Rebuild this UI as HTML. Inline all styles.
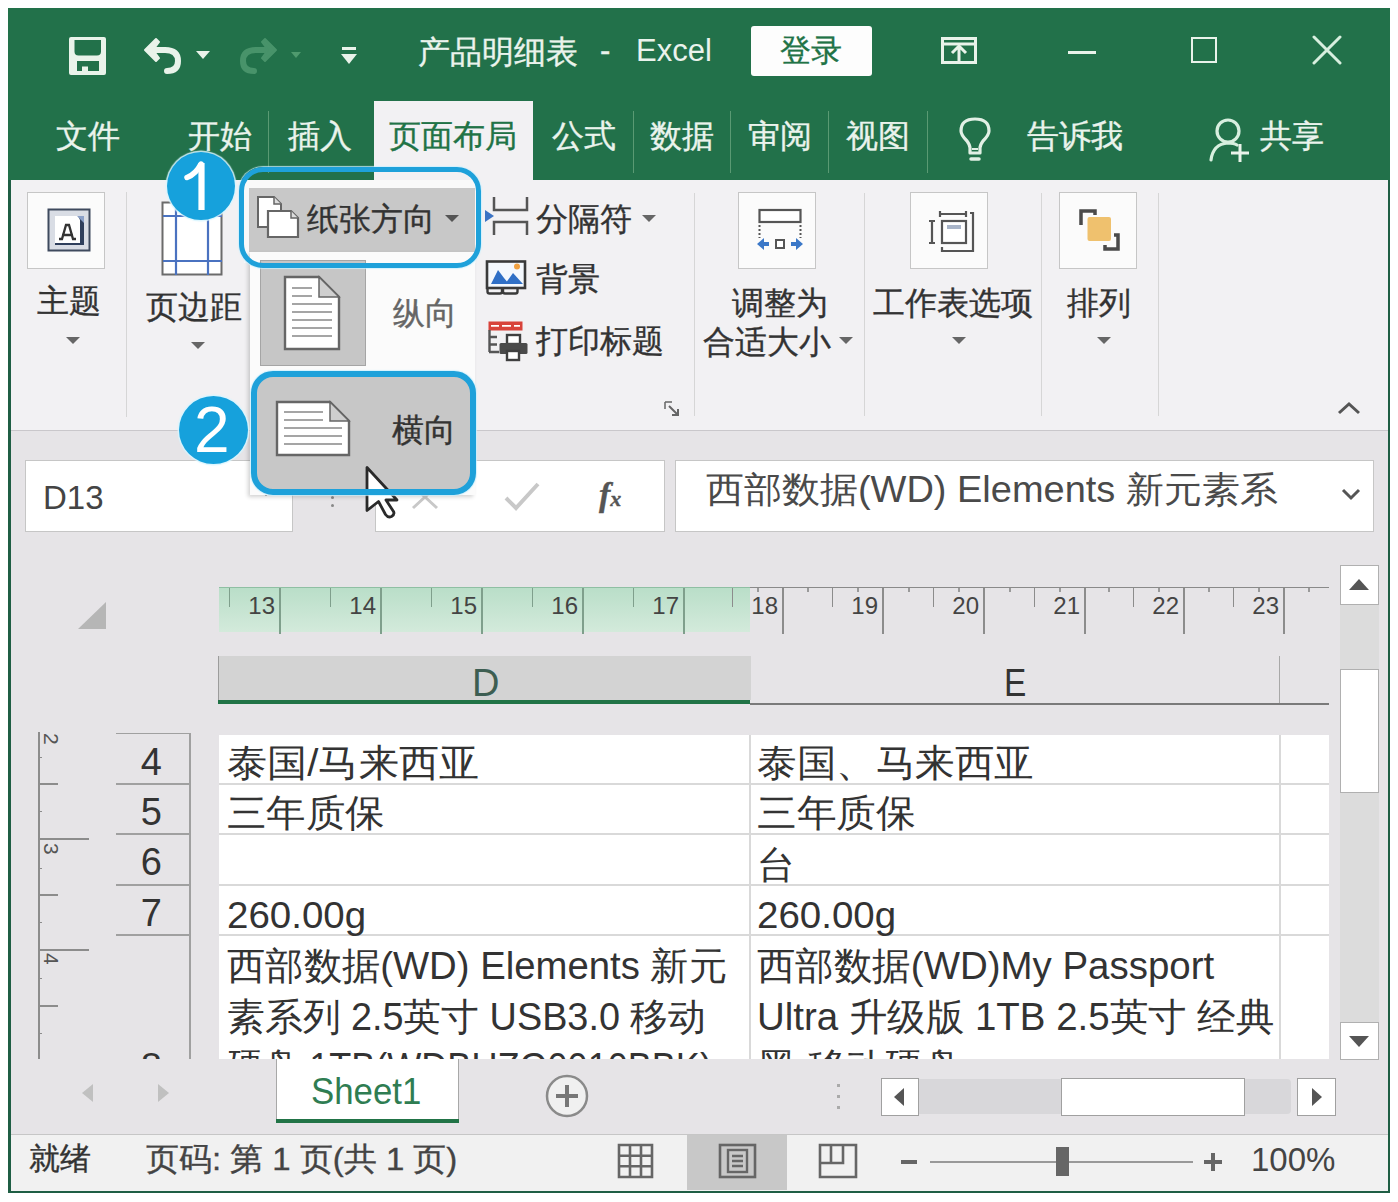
<!DOCTYPE html>
<html><head><meta charset="utf-8">
<style>
html,body{margin:0;padding:0;}
body{width:1398px;height:1202px;overflow:hidden;background:#fff;position:relative;font-family:"Liberation Sans",sans-serif;}
.a{position:absolute;}
.t{position:absolute;white-space:nowrap;line-height:1;-webkit-text-stroke:0.35px currentColor;}
.wt{color:#eaf3ec;}
.ns{-webkit-text-stroke:0 !important;}
.sep{position:absolute;width:1px;background:#d6d6d6;}
.gsep{position:absolute;width:1px;background:#5a9a73;}
</style></head><body>
<!-- window frame -->
<div class="a" style="left:8px;top:8px;width:1382px;height:1185px;background:#1f5e44;"></div>
<!-- title bar -->
<div class="a" style="left:8px;top:8px;width:1382px;height:172px;background:#22714a;"></div>
<!-- ribbon -->
<div class="a" style="left:11px;top:180px;width:1377px;height:250px;background:#f2f1f3;"></div>
<div class="a" style="left:11px;top:430px;width:1377px;height:1px;background:#c9c7cb;"></div>
<!-- formula/grid background -->
<div class="a" style="left:11px;top:431px;width:1377px;height:703px;background:#e6e4e7;"></div>
<!-- status bar -->
<div class="a" style="left:11px;top:1134px;width:1377px;height:1px;background:#c6c6c6;"></div>
<div class="a" style="left:11px;top:1135px;width:1377px;height:56px;background:#f1f1f1;"></div>

<!-- TITLE -->
<div class="t wt" style="left:418px;top:36px;font-size:32px;">产品明细表</div>
<div class="t wt" style="left:600px;top:35px;font-size:31px;">-</div>
<div class="t wt ns" style="left:636px;top:35px;font-size:31px;">Excel</div>
<div class="a" style="left:751px;top:26px;width:121px;height:50px;background:#fdfdfd;border-radius:3px;"></div>
<div class="t" style="left:780px;top:35px;font-size:31px;color:#217346;">登录</div>


<!-- TITLE ICONS -->
<svg class="a" style="left:68px;top:36px;" width="40" height="40" viewBox="0 0 40 40">
 <path d="M1 3 Q1 1 3 1 H36 Q38 1 38 3 V37 Q38 39 36 39 H3 Q1 39 1 37 Z M6.5 4 V15.5 Q6.5 19.5 10.5 19.5 H29 Q33 19.5 33 15.5 V4 Z M9 25 V35 H14 V30.5 H20 V35 H31 V25 Z" fill="#e9f3ea" fill-rule="evenodd"/>
</svg>
<svg class="a" style="left:143px;top:35px;" width="42" height="40" viewBox="0 0 42 40">
 <path d="M8 15 H22 Q35 15 35 26 Q35 36 24 36" stroke="#e9f3ea" stroke-width="6" fill="none" stroke-linecap="round"/>
 <path d="M2 15 L13 4 L16 7 L10 15 L16 23 L13 26 Z" fill="#e9f3ea" stroke="#e9f3ea" stroke-width="2" stroke-linejoin="round"/>
</svg>
<svg class="a" style="left:195px;top:50px;" width="16" height="10"><path d="M1 1 H15 L8 9Z" fill="#e9f3ea"/></svg>
<svg class="a" style="left:236px;top:35px;" width="42" height="40" viewBox="0 0 42 40">
 <path d="M34 15 H20 Q7 15 7 26 Q7 36 18 36" stroke="#48936a" stroke-width="6" fill="none" stroke-linecap="round"/>
 <path d="M40 15 L29 4 L26 7 L32 15 L26 23 L29 26 Z" fill="#48936a" stroke="#48936a" stroke-width="2" stroke-linejoin="round"/>
</svg>
<svg class="a" style="left:290px;top:51px;" width="12" height="8"><path d="M1 1 H11 L6 7Z" fill="#4f9a6e"/></svg>
<div class="a" style="left:342px;top:47px;width:14px;height:3px;background:#e9f3ea;"></div>
<svg class="a" style="left:340px;top:53px;" width="18" height="12"><path d="M1 1 H17 L9 11Z" fill="#e9f3ea"/></svg>

<svg class="a" style="left:940px;top:36px;" width="38" height="29" viewBox="0 0 38 29">
 <rect x="2.5" y="2.5" width="33" height="24" fill="none" stroke="#e9f3ea" stroke-width="3"/>
 <path d="M3 8 H35" stroke="#e9f3ea" stroke-width="3"/>
 <path d="M19 27 V10 M12 17 L19 10 L26 17" stroke="#e9f3ea" stroke-width="3" fill="none"/>
</svg>
<div class="a" style="left:1068px;top:51px;width:28px;height:3px;background:#e9f3ea;"></div>
<div class="a" style="left:1191px;top:37px;width:22px;height:22px;border:2.5px solid #e9f3ea;"></div>
<svg class="a" style="left:1311px;top:35px;" width="32" height="30" viewBox="0 0 32 30">
 <path d="M3 2 L29 28 M29 2 L3 28" stroke="#d8efdf" stroke-width="3" stroke-linecap="round"/>
</svg>
<svg class="a" style="left:957px;top:116px;" width="36" height="48" viewBox="0 0 36 48">
 <path d="M13 37 V32 Q13 29 10 25 Q4 19 4 15 Q4 3 18 3 Q32 3 32 15 Q32 19 26 25 Q23 29 23 32 V37 Z" fill="none" stroke="#e2f0e5" stroke-width="3.2" stroke-linejoin="round"/>
 <path d="M15 33 H21" stroke="#e2f0e5" stroke-width="2"/>
 <path d="M14 43 H22" stroke="#e2f0e5" stroke-width="3.5" stroke-linecap="round"/>
</svg>
<svg class="a" style="left:1207px;top:117px;" width="46" height="46" viewBox="0 0 46 46">
 <circle cx="21" cy="14" r="11" fill="none" stroke="#d8efdf" stroke-width="3.2"/>
 <path d="M4 43 Q6 27 21 26 Q27 26 30 28" fill="none" stroke="#d8efdf" stroke-width="3.2" stroke-linecap="round"/>
 <path d="M33 27 V45 M24 36 H42" stroke="#e9f3ea" stroke-width="3"/>
</svg>

<!-- TABS -->
<div class="t wt" style="left:56px;top:120px;font-size:32px;">文件</div>
<div class="t wt" style="left:188px;top:120px;font-size:32px;">开始</div>
<div class="gsep" style="left:268px;top:111px;height:62px;"></div>
<div class="t wt" style="left:288px;top:120px;font-size:32px;">插入</div>
<div class="a" style="left:374px;top:101px;width:159px;height:79px;background:#f2f1f3;"></div>
<div class="t" style="left:389px;top:120px;font-size:32px;color:#217346;">页面布局</div>
<div class="t wt" style="left:552px;top:120px;font-size:32px;">公式</div>
<div class="gsep" style="left:633px;top:111px;height:62px;"></div>
<div class="t wt" style="left:650px;top:120px;font-size:32px;">数据</div>
<div class="gsep" style="left:730px;top:111px;height:62px;"></div>
<div class="t wt" style="left:748px;top:120px;font-size:32px;">审阅</div>
<div class="gsep" style="left:828px;top:111px;height:62px;"></div>
<div class="t wt" style="left:846px;top:120px;font-size:32px;">视图</div>
<div class="gsep" style="left:927px;top:111px;height:62px;"></div>
<div class="t wt" style="left:1027px;top:120px;font-size:32px;">告诉我</div>
<div class="t wt" style="left:1260px;top:120px;font-size:32px;">共享</div>


<!-- RIBBON CONTENT -->
<!-- theme -->
<div class="a" style="left:27px;top:192px;width:76px;height:75px;background:#fbfbfb;border:1px solid #c6c6c6;"></div>
<svg class="a" style="left:47px;top:208px;" width="45" height="45" viewBox="0 0 45 45">
 <rect x="1.5" y="1.5" width="41" height="41" fill="#d9dde5" stroke="#3e4a5e" stroke-width="2"/>
 <rect x="8" y="8" width="29" height="29" fill="#fff"/>
 <path d="M31 8 L37 8 L37 37 L8 37 L8 35 L33 35 L33 12 Z" fill="#2f3f5c"/>
 <path d="M30 8 L37 15 L37 8Z" fill="#8aa0c8"/>
 <path d="M12 31 L15 31 L19 17 L22 17 L26 31 L29 31 M15 27 L26 27" fill="none" stroke="#333" stroke-width="2.3"/>
</svg>
<div class="t" style="left:37px;top:285px;font-size:32px;color:#333;">主题</div>
<svg class="a" style="left:65px;top:336px;" width="16" height="9"><path d="M1 1 L15 1 L8 8Z" fill="#666"/></svg>
<div class="sep" style="left:126px;top:192px;height:225px;"></div>
<!-- margins -->
<svg class="a" style="left:161px;top:201px;" width="63" height="76" viewBox="0 0 63 76">
 <rect x="1.5" y="1.5" width="59" height="72" fill="#fff" stroke="#6b6b6b" stroke-width="2"/>
 <path d="M15 2 V74 M47 2 V74 M2 15 H61 M2 60 H61" stroke="#4a72c0" stroke-width="2.2" fill="none"/>
</svg>
<div class="t" style="left:146px;top:291px;font-size:32px;color:#333;">页边距</div>
<svg class="a" style="left:190px;top:341px;" width="16" height="9"><path d="M1 1 L15 1 L8 8Z" fill="#666"/></svg>

<!-- orientation button (gray) -->
<div class="a" style="left:244px;top:180px;width:232px;height:83px;background:#f9f9f9;"></div>
<div class="a" style="left:249px;top:188px;width:226px;height:64px;background:#c8c8c8;"></div>
<svg class="a" style="left:256px;top:196px;" width="44" height="43" viewBox="0 0 44 43">
 <path d="M2 1 H18 L25 8 V15 H12 V31 H2 Z" fill="#fff" stroke="#666" stroke-width="2"/>
 <path d="M18 1 V8 H25" fill="#ddd" stroke="#666" stroke-width="1.5"/>
 <path d="M12 15 H35 L42 22 V41 H12 Z" fill="#fff" stroke="#666" stroke-width="2.2"/>
 <path d="M35 15 V22 H42" fill="#ddd" stroke="#666" stroke-width="1.5"/>
</svg>
<div class="t" style="left:307px;top:203px;font-size:32px;color:#333;">纸张方向</div>
<svg class="a" style="left:444px;top:214px;" width="16" height="9"><path d="M1 1 L15 1 L8 8Z" fill="#555"/></svg>

<!-- breaks, background, print titles -->
<svg class="a" style="left:484px;top:195px;" width="46" height="42" viewBox="0 0 46 42">
 <path d="M1 15 L10 21 L1 27Z" fill="#3b73c4"/>
 <path d="M10 2 V15 H43 V2 M10 40 V27 H43 V40" fill="none" stroke="#555" stroke-width="2.5"/>
</svg>
<div class="t" style="left:536px;top:203px;font-size:32px;color:#333;">分隔符</div>
<svg class="a" style="left:641px;top:214px;" width="16" height="9"><path d="M1 1 L15 1 L8 8Z" fill="#666"/></svg>
<svg class="a" style="left:484px;top:258px;" width="44" height="38" viewBox="0 0 44 38">
 <rect x="3" y="3.5" width="38" height="26.5" fill="#f4f8fd" stroke="#3a3a3a" stroke-width="2.6"/>
 <path d="M7 26 L14 12 L20 20 L25 26 Z" fill="#2f6fc6"/>
 <path d="M21 26 L29 15 L39 26 Z" fill="#2f6fc6"/>
 <circle cx="33" cy="8.5" r="3" fill="#f0a040"/>
 <path d="M3.5 31 V33.5 Q3.5 35.5 5.5 35.5 H16 Q18 35.5 18 33.5 V31 M19 31 V33.5 Q19 35.5 21 35.5 H31.5 Q33.5 35.5 33.5 33.5 V31" fill="none" stroke="#3a3a3a" stroke-width="2.4"/>
</svg>
<div class="t" style="left:536px;top:263px;font-size:32px;color:#333;">背景</div>
<svg class="a" style="left:486px;top:319px;" width="44" height="44" viewBox="0 0 44 44">
 <rect x="2.5" y="2.5" width="34" height="9" fill="#d8433a"/>
 <path d="M5 6.8 H13 M16 6.8 H25 M28 6.8 H34" stroke="#fff" stroke-width="1.8"/>
 <path d="M3.5 11 V33 M3 18 H11 M3 25.5 H11 M3 33 H13" stroke="#555" stroke-width="2.4" fill="none"/>
 <rect x="21" y="16" width="13" height="9" fill="#fff" stroke="#3f3f3f" stroke-width="2.4"/>
 <rect x="13.5" y="24" width="28" height="11" rx="1.5" fill="#4a4a4a"/>
 <rect x="21" y="32" width="12" height="9" fill="#fff" stroke="#3f3f3f" stroke-width="2.4"/>
</svg>
<div class="t" style="left:536px;top:325px;font-size:32px;color:#333;">打印标题</div>
<svg class="a" style="left:664px;top:401px;" width="16" height="16" viewBox="0 0 16 16">
 <path d="M1 1 H8 M1 1 V8" stroke="#666" stroke-width="1.5" fill="none"/>
 <path d="M5 5 L14 14 M14 8 V14 H8" stroke="#666" stroke-width="2" fill="none"/>
</svg>
<div class="sep" style="left:694px;top:193px;height:223px;"></div>

<!-- scale to fit -->
<div class="a" style="left:738px;top:192px;width:76px;height:75px;background:#fbfbfb;border:1px solid #c6c6c6;"></div>
<svg class="a" style="left:755px;top:207px;" width="50" height="44" viewBox="0 0 50 44">
 <rect x="4.5" y="3" width="41" height="12" fill="#fff" stroke="#555" stroke-width="2.2"/>
 <path d="M4.5 18 V31 M45.5 18 V31" stroke="#555" stroke-width="2" stroke-dasharray="2 2" fill="none"/>
 <path d="M2 37 L9 31 V35 H14 V39 H9 V43 Z" fill="#3b78c8"/>
 <path d="M48 37 L41 31 V35 H36 V39 H41 V43 Z" fill="#3b78c8"/>
 <rect x="21" y="33" width="8" height="8" fill="#fff" stroke="#555" stroke-width="2"/>
</svg>
<div class="t" style="left:732px;top:287px;font-size:32px;color:#333;">调整为</div>
<div class="t" style="left:703px;top:326px;font-size:32px;color:#333;">合适大小</div>
<svg class="a" style="left:838px;top:336px;" width="16" height="9"><path d="M1 1 L15 1 L8 8Z" fill="#666"/></svg>
<div class="sep" style="left:864px;top:193px;height:223px;"></div>

<!-- sheet options -->
<div class="a" style="left:910px;top:192px;width:76px;height:75px;background:#fbfbfb;border:1px solid #c6c6c6;"></div>
<svg class="a" style="left:928px;top:210px;" width="48" height="44" viewBox="0 0 48 44">
 <path d="M4 11 V33 M1 11 H7 M1 33 H7" stroke="#555" stroke-width="2.2" fill="none"/>
 <path d="M12 4 H38 M12 1 V7 M38 1 V7" stroke="#555" stroke-width="2.2" fill="none"/>
 <rect x="14" y="11" width="24" height="22" fill="#fff" stroke="#555" stroke-width="2.2"/>
 <rect x="19" y="15" width="14" height="4" fill="#a8b4c8"/>
 <path d="M42 3 H45 V41 H14 V37" stroke="#555" stroke-width="2.2" fill="none"/>
</svg>
<div class="t" style="left:873px;top:287px;font-size:32px;color:#333;">工作表选项</div>
<svg class="a" style="left:951px;top:336px;" width="16" height="9"><path d="M1 1 L15 1 L8 8Z" fill="#666"/></svg>
<div class="sep" style="left:1041px;top:193px;height:223px;"></div>

<!-- arrange -->
<div class="a" style="left:1059px;top:192px;width:76px;height:75px;background:#fbfbfb;border:1px solid #c6c6c6;"></div>
<svg class="a" style="left:1078px;top:208px;" width="44" height="44" viewBox="0 0 44 44">
 <path d="M3 17 V3 H17 V7" stroke="#4a4a4a" stroke-width="3.5" fill="none"/>
 <rect x="9.5" y="9" width="23.5" height="24" rx="2" fill="#efc16e"/>
 <path d="M27 37 V41 H40 V27 H36" stroke="#4a4a4a" stroke-width="3.5" fill="none"/>
</svg>
<div class="t" style="left:1067px;top:287px;font-size:32px;color:#333;">排列</div>
<svg class="a" style="left:1096px;top:336px;" width="16" height="9"><path d="M1 1 L15 1 L8 8Z" fill="#666"/></svg>
<div class="sep" style="left:1158px;top:193px;height:223px;"></div>
<svg class="a" style="left:1337px;top:400px;" width="24" height="16" viewBox="0 0 24 16"><path d="M2 13 L12 4 L22 13" stroke="#555" stroke-width="3" fill="none"/></svg>


<!-- FORMULA BAR -->
<div class="a" style="left:25px;top:460px;width:266px;height:70px;background:#fff;border:1px solid #c6c6c6;"></div>
<div class="t ns" style="left:43px;top:481px;font-size:33px;color:#444;">D13</div>
<svg class="a" style="left:259px;top:488px;" width="14" height="9"><path d="M1 1 L13 1 L7 8Z" fill="#666"/></svg>
<div class="a" style="left:331px;top:488px;width:3px;height:3px;background:#888;border-radius:2px;"></div>
<div class="a" style="left:331px;top:496px;width:3px;height:3px;background:#888;border-radius:2px;"></div>
<div class="a" style="left:331px;top:504px;width:3px;height:3px;background:#888;border-radius:2px;"></div>
<div class="a" style="left:375px;top:460px;width:288px;height:70px;background:#fff;border:1px solid #c6c6c6;"></div>
<svg class="a" style="left:408px;top:482px;" width="34" height="30" viewBox="0 0 34 30"><path d="M5 4 L29 26 M29 4 L5 26" stroke="#c8c8c8" stroke-width="3" fill="none"/></svg>
<svg class="a" style="left:503px;top:481px;" width="38" height="30" viewBox="0 0 38 30"><path d="M3 17 L13 27 L35 3" stroke="#c8c8c8" stroke-width="4" fill="none"/></svg>
<div class="t" style="left:599px;top:478px;font-size:34px;color:#555;font-family:'Liberation Serif',serif;font-style:italic;font-weight:bold;">f<span style="font-size:22px;">x</span></div>
<div class="a" style="left:675px;top:460px;width:697px;height:70px;background:#fff;border:1px solid #c6c6c6;"></div>
<div class="t ns" style="left:706px;top:472px;font-size:36px;color:#4a4a4a;transform:scaleX(1.055);transform-origin:0 0;">西部数据(WD) Elements 新元素系</div>
<svg class="a" style="left:1340px;top:487px;" width="22" height="14" viewBox="0 0 22 14"><path d="M3 3 L11 11 L19 3" stroke="#555" stroke-width="3" fill="none"/></svg>


<!-- GRID AREA -->
<svg class="a" style="left:78px;top:602px;" width="29" height="27"><path d="M28 0 V27 H0 Z" fill="#b6b6b6"/></svg>
<!-- horizontal ruler -->
<div class="a" style="left:219px;top:587px;width:531px;height:45px;background:linear-gradient(#b9dec8,#d3eadb);"></div>
<div class="a" style="left:219px;top:587px;width:531px;height:1px;background:#8fbfa3;"></div><div class="a" style="left:750px;top:587px;width:579px;height:1px;background:#8a8a8a;"></div>
<div class="a" style="left:279px;top:588px;width:2px;height:46px;background:#7f9f8c;"></div>
<div class="t ns" style="left:243px;top:594px;width:32px;text-align:right;font-size:24px;color:#444;">13</div>
<div class="a" style="left:229px;top:588px;width:1px;height:19px;background:#7f9f8c;"></div>
<div class="a" style="left:380px;top:588px;width:2px;height:46px;background:#7f9f8c;"></div>
<div class="t ns" style="left:344px;top:594px;width:32px;text-align:right;font-size:24px;color:#444;">14</div>
<div class="a" style="left:330px;top:588px;width:1px;height:19px;background:#7f9f8c;"></div>
<div class="a" style="left:481px;top:588px;width:2px;height:46px;background:#7f9f8c;"></div>
<div class="t ns" style="left:445px;top:594px;width:32px;text-align:right;font-size:24px;color:#444;">15</div>
<div class="a" style="left:431px;top:588px;width:1px;height:19px;background:#7f9f8c;"></div>
<div class="a" style="left:582px;top:588px;width:2px;height:46px;background:#7f9f8c;"></div>
<div class="t ns" style="left:546px;top:594px;width:32px;text-align:right;font-size:24px;color:#444;">16</div>
<div class="a" style="left:532px;top:588px;width:1px;height:19px;background:#7f9f8c;"></div>
<div class="a" style="left:683px;top:588px;width:2px;height:46px;background:#7f9f8c;"></div>
<div class="t ns" style="left:647px;top:594px;width:32px;text-align:right;font-size:24px;color:#444;">17</div>
<div class="a" style="left:633px;top:588px;width:1px;height:19px;background:#7f9f8c;"></div>
<div class="a" style="left:782px;top:588px;width:2px;height:46px;background:#8c8c8c;"></div>
<div class="t ns" style="left:746px;top:594px;width:32px;text-align:right;font-size:24px;color:#444;">18</div>
<div class="a" style="left:732px;top:588px;width:1px;height:19px;background:#8c8c8c;"></div>
<div class="a" style="left:757px;top:588px;width:2px;height:4px;background:#9a9a9a;"></div>
<div class="a" style="left:882px;top:588px;width:2px;height:46px;background:#8c8c8c;"></div>
<div class="t ns" style="left:846px;top:594px;width:32px;text-align:right;font-size:24px;color:#444;">19</div>
<div class="a" style="left:832px;top:588px;width:1px;height:19px;background:#8c8c8c;"></div>
<div class="a" style="left:807px;top:588px;width:2px;height:4px;background:#9a9a9a;"></div>
<div class="a" style="left:857px;top:588px;width:2px;height:4px;background:#9a9a9a;"></div>
<div class="a" style="left:983px;top:588px;width:2px;height:46px;background:#8c8c8c;"></div>
<div class="t ns" style="left:947px;top:594px;width:32px;text-align:right;font-size:24px;color:#444;">20</div>
<div class="a" style="left:933px;top:588px;width:1px;height:19px;background:#8c8c8c;"></div>
<div class="a" style="left:908px;top:588px;width:2px;height:4px;background:#9a9a9a;"></div>
<div class="a" style="left:958px;top:588px;width:2px;height:4px;background:#9a9a9a;"></div>
<div class="a" style="left:1084px;top:588px;width:2px;height:46px;background:#8c8c8c;"></div>
<div class="t ns" style="left:1048px;top:594px;width:32px;text-align:right;font-size:24px;color:#444;">21</div>
<div class="a" style="left:1034px;top:588px;width:1px;height:19px;background:#8c8c8c;"></div>
<div class="a" style="left:1009px;top:588px;width:2px;height:4px;background:#9a9a9a;"></div>
<div class="a" style="left:1059px;top:588px;width:2px;height:4px;background:#9a9a9a;"></div>
<div class="a" style="left:1183px;top:588px;width:2px;height:46px;background:#8c8c8c;"></div>
<div class="t ns" style="left:1147px;top:594px;width:32px;text-align:right;font-size:24px;color:#444;">22</div>
<div class="a" style="left:1133px;top:588px;width:1px;height:19px;background:#8c8c8c;"></div>
<div class="a" style="left:1108px;top:588px;width:2px;height:4px;background:#9a9a9a;"></div>
<div class="a" style="left:1158px;top:588px;width:2px;height:4px;background:#9a9a9a;"></div>
<div class="a" style="left:1283px;top:588px;width:2px;height:46px;background:#8c8c8c;"></div>
<div class="t ns" style="left:1247px;top:594px;width:32px;text-align:right;font-size:24px;color:#444;">23</div>
<div class="a" style="left:1233px;top:588px;width:1px;height:19px;background:#8c8c8c;"></div>
<div class="a" style="left:1208px;top:588px;width:2px;height:4px;background:#9a9a9a;"></div>
<div class="a" style="left:1258px;top:588px;width:2px;height:4px;background:#9a9a9a;"></div>
<div class="a" style="left:1308px;top:588px;width:2px;height:4px;background:#9a9a9a;"></div>
<!-- column headers -->
<div class="a" style="left:218px;top:656px;width:532px;height:44px;background:#d3d3d3;border-left:1px solid #9c9c9c;"></div>
<div class="a" style="left:218px;top:700px;width:532px;height:4px;background:#217346;"></div>
<div class="a" style="left:750px;top:703px;width:579px;height:2px;background:#7a7a7a;"></div>
<div class="a" style="left:1279px;top:656px;width:1px;height:47px;background:#a8a8a8;"></div>
<div class="t ns" style="left:472px;top:664px;font-size:38px;color:#3d5e52;">D</div>
<div class="t ns" style="left:1004px;top:664px;font-size:38px;color:#333;transform:scaleX(0.88);transform-origin:0 0;">E</div>

<!-- vertical ruler -->
<div class="a" style="left:38px;top:732px;width:2px;height:327px;background:#8c8c8c;"></div>
<div class="a" style="left:38px;top:783px;width:20px;height:2px;background:#8c8c8c;"></div>
<div class="a" style="left:38px;top:838px;width:51px;height:2px;background:#8c8c8c;"></div>
<div class="a" style="left:38px;top:894px;width:20px;height:2px;background:#8c8c8c;"></div>
<div class="a" style="left:38px;top:949px;width:51px;height:2px;background:#8c8c8c;"></div>
<div class="a" style="left:38px;top:1005px;width:20px;height:2px;background:#8c8c8c;"></div>
<div class="a" style="left:38px;top:757px;width:4px;height:1px;background:#8c8c8c;"></div>
<div class="a" style="left:38px;top:811px;width:4px;height:1px;background:#8c8c8c;"></div>
<div class="a" style="left:38px;top:868px;width:4px;height:1px;background:#8c8c8c;"></div>
<div class="a" style="left:38px;top:922px;width:4px;height:1px;background:#8c8c8c;"></div>
<div class="a" style="left:38px;top:978px;width:4px;height:1px;background:#8c8c8c;"></div>
<div class="a" style="left:38px;top:1033px;width:4px;height:1px;background:#8c8c8c;"></div>
<div class="t ns" style="left:42px;top:733px;font-size:21px;color:#555;transform:rotate(90deg);transform-origin:10px 10px;">2</div>
<div class="t ns" style="left:42px;top:843px;font-size:21px;color:#555;transform:rotate(90deg);transform-origin:10px 10px;">3</div>
<div class="t ns" style="left:42px;top:953px;font-size:21px;color:#555;transform:rotate(90deg);transform-origin:10px 10px;">4</div>

<!-- row headers -->
<div class="a" style="left:189px;top:733px;width:2px;height:326px;background:#a0a0a0;"></div>
<div class="a" style="left:116px;top:733px;width:74px;height:1px;background:#a0a0a0;"></div>
<div class="a" style="left:116px;top:783px;width:74px;height:2px;background:#a0a0a0;"></div>
<div class="a" style="left:116px;top:833px;width:74px;height:2px;background:#a0a0a0;"></div>
<div class="a" style="left:116px;top:884px;width:74px;height:2px;background:#a0a0a0;"></div>
<div class="a" style="left:116px;top:934px;width:74px;height:2px;background:#a0a0a0;"></div>
<div class="t ns" style="left:120px;top:743px;width:42px;text-align:right;font-size:38px;color:#333;">4</div>
<div class="t ns" style="left:120px;top:793px;width:42px;text-align:right;font-size:38px;color:#333;">5</div>
<div class="t ns" style="left:120px;top:843px;width:42px;text-align:right;font-size:38px;color:#333;">6</div>
<div class="t ns" style="left:120px;top:894px;width:42px;text-align:right;font-size:38px;color:#333;">7</div>
<div class="a" style="left:116px;top:1036px;width:73px;height:23px;overflow:hidden;"><div class="t ns" style="left:4px;top:12px;width:42px;text-align:right;font-size:38px;color:#333;">8</div></div>

<!-- cells -->
<div class="a" style="left:219px;top:735px;width:1110px;height:324px;background:#fff;overflow:hidden;">
 <div class="a" style="left:0;top:48px;width:1110px;height:2px;background:#d9d9d9;"></div>
 <div class="a" style="left:0;top:98px;width:1110px;height:2px;background:#d9d9d9;"></div>
 <div class="a" style="left:0;top:149px;width:1110px;height:2px;background:#d9d9d9;"></div>
 <div class="a" style="left:0;top:199px;width:1110px;height:2px;background:#d9d9d9;"></div>
 <div class="a" style="left:530px;top:0;width:2px;height:324px;background:#d9d9d9;"></div>
 <div class="a" style="left:1060px;top:0;width:2px;height:324px;background:#d9d9d9;"></div>
 <div class="t cl ns" id="cl0" style="left:8px;top:9px;font-size:38px;color:#333;transform-origin:0 0;transform:scaleX(1.056);">泰国/马来西亚</div>
 <div class="t cl ns" id="cl1" style="left:8px;top:59px;font-size:38px;color:#333;transform-origin:0 0;transform:scaleX(1.039);">三年质保</div>
 <div class="t cl ns" id="cl2" style="left:538px;top:9px;font-size:38px;color:#333;transform-origin:0 0;transform:scaleX(1.041);">泰国、马来西亚</div>
 <div class="t cl ns" id="cl3" style="left:538px;top:59px;font-size:38px;color:#333;transform-origin:0 0;transform:scaleX(1.046);">三年质保</div>
 <div class="t cl ns" id="cl4" style="left:538px;top:111px;font-size:38px;color:#333;transform-origin:0 0;transform:scaleX(1.0);">台</div>
 <div class="t cl ns" id="cl5" style="left:8px;top:212px;font-size:38px;color:#333;transform-origin:0 0;transform:scaleX(1.008);">西部数据(WD) Elements 新元</div>
 <div class="t cl ns" id="cl6" style="left:8px;top:263px;font-size:38px;color:#333;transform-origin:0 0;transform:scaleX(0.995);">素系列 2.5英寸 USB3.0 移动</div>
 <div class="t cl ns" id="cl7" style="left:8px;top:313px;font-size:38px;color:#333;transform-origin:0 0;transform:scaleX(0.949);">硬盘 1TB(WDBUZG0010BBK)</div>
 <div class="t cl ns" id="cl8" style="left:538px;top:212px;font-size:38px;color:#333;transform-origin:0 0;transform:scaleX(1.012);">西部数据(WD)My Passport</div>
 <div class="t cl ns" id="cl9" style="left:538px;top:263px;font-size:38px;color:#333;transform-origin:0 0;transform:scaleX(1.012);">Ultra 升级版 1TB 2.5英寸 经典</div>
 <div class="t cl ns" id="cl10" style="left:538px;top:313px;font-size:38px;color:#333;transform-origin:0 0;transform:scaleX(1.022);">黑 移动硬盘</div>
 <div class="t ns" style="left:8px;top:162px;font-size:37px;color:#333;transform:scaleX(1.04);transform-origin:0 0;">260.00g</div>
 <div class="t ns" style="left:538px;top:162px;font-size:37px;color:#333;transform:scaleX(1.04);transform-origin:0 0;">260.00g</div>
</div>
<!-- vertical scrollbar -->
<div class="a" style="left:1340px;top:565px;width:39px;height:494px;background:#dcdcdc;"></div>
<div class="a" style="left:1340px;top:565px;width:37px;height:38px;background:#fff;border:1px solid #b0b0b0;"></div>
<svg class="a" style="left:1348px;top:577px;" width="22" height="14"><path d="M1 13 L11 2 L21 13Z" fill="#555"/></svg>
<div class="a" style="left:1340px;top:669px;width:37px;height:122px;background:#fff;border:1px solid #b0b0b0;"></div>
<div class="a" style="left:1340px;top:1022px;width:37px;height:36px;background:#fff;border:1px solid #b0b0b0;"></div>
<svg class="a" style="left:1348px;top:1035px;" width="22" height="14"><path d="M1 1 L11 12 L21 1Z" fill="#555"/></svg>

<!-- sheet tab bar -->
<svg class="a" style="left:80px;top:1083px;" width="14" height="20"><path d="M13 1 L2 10 L13 19Z" fill="#c0c0c0"/></svg>
<svg class="a" style="left:157px;top:1083px;" width="14" height="20"><path d="M1 1 L12 10 L1 19Z" fill="#c0c0c0"/></svg>
<div class="a" style="left:276px;top:1059px;width:181px;height:60px;background:#fff;border-left:1px solid #a8a8a8;border-right:1px solid #a8a8a8;"></div>
<div class="a" style="left:276px;top:1119px;width:183px;height:4px;background:#217346;"></div>
<div class="t ns" style="left:311px;top:1073px;font-size:37px;color:#2f7d52;transform:scaleX(0.94);transform-origin:0 0;">Sheet1</div>
<svg class="a" style="left:544px;top:1073px;" width="46" height="46" viewBox="0 0 46 46">
 <circle cx="23" cy="23" r="20" fill="#f0f0f0" stroke="#8a8a8a" stroke-width="2.5"/>
 <path d="M23 12 V34 M12 23 H34" stroke="#777" stroke-width="4"/>
</svg>
<div class="a" style="left:837px;top:1084px;width:3px;height:3px;background:#aaa;"></div>
<div class="a" style="left:837px;top:1095px;width:3px;height:3px;background:#aaa;"></div>
<div class="a" style="left:837px;top:1106px;width:3px;height:3px;background:#aaa;"></div>
<div class="a" style="left:905px;top:1079px;width:386px;height:35px;background:#d8d7da;border-radius:4px;"></div>
<div class="a" style="left:881px;top:1078px;width:36px;height:36px;background:#fff;border:1px solid #a0a0a0;"></div>
<svg class="a" style="left:892px;top:1087px;" width="14" height="20"><path d="M12 1 L2 10 L12 19Z" fill="#555"/></svg>
<div class="a" style="left:1061px;top:1078px;width:182px;height:36px;background:#fff;border:1px solid #a0a0a0;"></div>
<div class="a" style="left:1297px;top:1078px;width:37px;height:36px;background:#fff;border:1px solid #a0a0a0;"></div>
<svg class="a" style="left:1310px;top:1087px;" width="14" height="20"><path d="M2 1 L12 10 L2 19Z" fill="#555"/></svg>

<!-- status bar -->
<div class="t" style="left:29px;top:1143px;font-size:31px;color:#333;">就绪</div>
<div class="t" style="left:146px;top:1143px;font-size:32px;color:#444;transform:scaleX(1.03);transform-origin:0 0;">页码: 第 1 页(共 1 页)</div>
<svg class="a" style="left:617px;top:1143px;" width="37" height="36" viewBox="0 0 37 36">
 <path d="M2 2 H35 V34 H2 Z M2 12.7 H35 M2 23.3 H35 M13 2 V34 M24 2 V34" stroke="#666" stroke-width="2.6" fill="none"/>
</svg>
<div class="a" style="left:687px;top:1135px;width:100px;height:55px;background:#c8c8c8;"></div>
<svg class="a" style="left:718px;top:1143px;" width="39" height="36" viewBox="0 0 39 36">
 <rect x="2" y="2" width="35" height="32" fill="none" stroke="#666" stroke-width="2.6"/>
 <rect x="10" y="7" width="19" height="22" fill="none" stroke="#666" stroke-width="2.4"/>
 <path d="M14 13 H25 M14 18 H25 M14 23 H25" stroke="#666" stroke-width="2.4"/>
</svg>
<svg class="a" style="left:818px;top:1143px;" width="40" height="36" viewBox="0 0 40 36">
 <path d="M2 2 H38 V34 H2 Z M2 20 H25 V2 M13 2 V20" stroke="#666" stroke-width="2.6" fill="none"/>
</svg>
<div class="a" style="left:901px;top:1160px;width:16px;height:4px;background:#666;"></div>
<div class="a" style="left:930px;top:1161px;width:263px;height:2px;background:#999;"></div>
<div class="a" style="left:1056px;top:1147px;width:13px;height:29px;background:#666;"></div>
<div class="a" style="left:1204px;top:1160px;width:18px;height:4px;background:#666;"></div>
<div class="a" style="left:1211px;top:1153px;width:4px;height:18px;background:#666;"></div>
<div class="t ns" style="left:1251px;top:1143px;font-size:33px;color:#444;">100%</div>

<!-- DROPDOWN MENU -->
<div class="a" style="left:250px;top:252px;width:225px;height:243px;background:#fbfbfb;box-shadow:-2px 2px 4px rgba(0,0,0,0.18);"></div>
<div class="a" style="left:260px;top:260px;width:104px;height:104px;background:#c6c6c6;border:1px solid #a5a5a5;"></div>
<svg class="a" style="left:283px;top:275px;" width="58" height="76" viewBox="0 0 58 76">
 <path d="M2 2 H36 L56 22 V74 H2 Z" fill="#fff" stroke="#666" stroke-width="2.4"/>
 <path d="M36 2 V22 H56 Z" fill="#cfcfcf" stroke="#666" stroke-width="1.5"/>
 <path d="M9 13 H29 M9 21 H29 M9 29 H49 M9 37 H49 M9 45 H49 M9 53 H49 M9 61 H49" stroke="#888" stroke-width="1.6"/>
</svg>
<div class="t" style="left:393px;top:297px;font-size:32px;color:#666;">纵向</div>
<div class="a" style="left:254px;top:372px;width:218px;height:122px;background:#c7c7c7;border-radius:18px;"></div>
<svg class="a" style="left:275px;top:400px;" width="77" height="57" viewBox="0 0 77 57">
 <path d="M2 2 H55 L74 21 V55 H2 Z" fill="#fff" stroke="#666" stroke-width="2.4"/>
 <path d="M55 2 V21 H74 Z" fill="#cfcfcf" stroke="#666" stroke-width="1.5"/>
 <path d="M9 12 H48 M9 20 H48 M9 28 H67 M9 36 H67 M9 44 H67" stroke="#888" stroke-width="1.6"/>
</svg>
<div class="t" style="left:392px;top:414px;font-size:32px;color:#333;">横向</div>

<!-- cursor -->
<svg class="a" style="left:364px;top:465px;" width="36" height="56" viewBox="0 0 36 56">
 <path d="M3 2.5 V45.5 L14.5 36.5 L21.5 49.5 Q24 53 27.5 51.5 Q31 49.5 29.5 46.5 L22 35 H33 Z" fill="#fff" stroke="#2a2a2a" stroke-width="2.8" stroke-linejoin="round"/>
</svg>
<!-- ANNOTATIONS -->
<div class="a" style="left:239px;top:167px;width:232px;height:91px;border:5.5px solid #1ea1da;border-radius:24px;box-shadow:0 0 1px 1px rgba(200,240,255,0.8);"></div>
<div class="a" style="left:251px;top:371px;width:213px;height:112px;border:6px solid #1ea1da;border-radius:22px;box-shadow:0 0 1px 1px rgba(200,240,255,0.8);"></div>
<div class="a" style="left:167px;top:152px;width:68px;height:68px;background:#16a1dc;border-radius:50%;box-shadow:0 0 1px 1.5px rgba(215,245,255,0.9);"></div>
<svg class="a" style="left:180px;top:158px;" width="32" height="56" viewBox="0 0 32 56"><path d="M21.5 5 V52" stroke="#fff" stroke-width="6.2" fill="none"/><path d="M7 19.5 Q16 16 21 6" stroke="#fff" stroke-width="5.5" fill="none" stroke-linecap="round"/></svg>
<div class="a" style="left:179px;top:396px;width:69px;height:68px;background:#16a1dc;border-radius:50%;box-shadow:0 0 1px 1.5px rgba(215,245,255,0.9);"></div>
<div class="t ns" style="left:194px;top:396px;font-size:64px;color:#fff;line-height:68px;">2</div>


</body></html>
